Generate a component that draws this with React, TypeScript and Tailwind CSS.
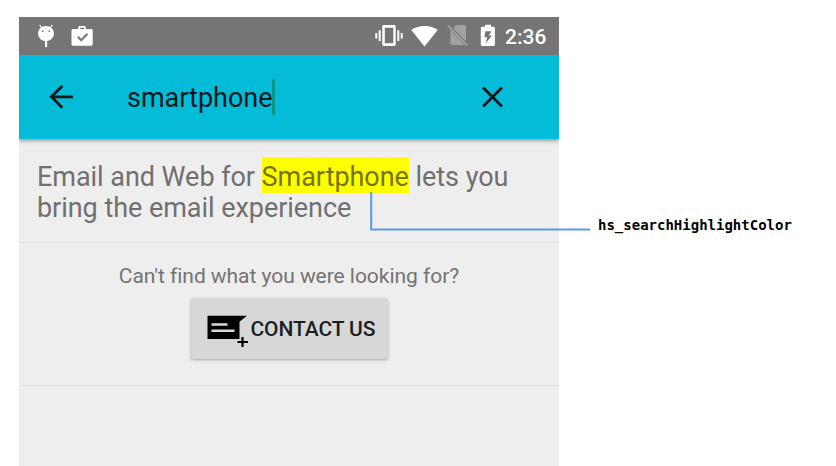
import type { ReactNode } from "react";

function StatusBar() {
  return (
    <div className="relative z-10 flex h-[38px] shrink-0 items-start bg-[#757575] text-white">
      <svg className="ml-[18px] mt-[7px] h-6 w-[18px]" viewBox="0 0 18 24" fill="currentColor">
        <path d="M2.6 0.8 4.6 3.6M15.4 0.8 13.4 3.6" stroke="currentColor" strokeWidth="1.1" />
        <path
          fillRule="evenodd"
          d="M9 1.9C13.5 1.9 16.9 5 16.9 9.2c0 4.6-3.4 7.9-7.9 7.9s-7.9-3.3-7.9-7.9C1.100 5 4.500 1.900 9 1.900ZM5.700 6.200a.9.9 0 1 0 0 1.800a.9.9 0 0 0 0-1.800Zm6.600 0a.9.9 0 1 0 0 1.800a.9.9 0 0 0 0-1.800Z"
        />
        <rect x="8" y="17" width="2.200" height="6.300" rx="1" />
      </svg>
      <svg className="ml-4 mt-[7px] h-6 w-6" viewBox="0 0 24 24" fill="currentColor">
        <path
          fillRule="evenodd"
          d="M7.200 5V3.600c0-.9.7-1.600 1.600-1.600h4.400c.9 0 1.600.7 1.600 1.600V5H20c1 0 1.700.7 1.700 1.700v13.200c0 1.100-.7 1.900-1.800 1.900H2.400C1.300 21.800.5 21 .5 19.900V6.700C.5 5.700 1.200 5 2.200 5Zm1.900 0h3.900V3.800H9.100ZM7.500 12 6 13.500l4.200 4.200 7-7.100-1.500-1.500-5.500 5.600Z"
        />
      </svg>
      <svg className="ml-[280px] mt-[5px] h-7 w-7" viewBox="0 0 28 28" fill="currentColor">
        <path
          fillRule="evenodd"
          d="M9 3h10c1 0 1.700.7 1.700 1.700v17.600c0 1-.7 1.700-1.700 1.700H9c-1 0-1.700-.7-1.700-1.700V4.700C7.300 3.700 8 3 9 3Zm.8 2.700v15.600h8.500V5.700Z"
        />
        <path d="M3.700 8.200h2v10.700h-2ZM.300 11h2v5.500h-2ZM22.300 8.200h2v10.700h-2ZM25.700 11h2v5.500h-2Z" />
      </svg>
      <svg className="ml-[8px] mt-[8px] h-[22px] w-[28px]" viewBox="0 0 28 22" fill="currentColor">
        <path d="M.3 5.100C8-.5 19.500-.5 26.700 5.100L13.500 21.500Z" />
      </svg>
      <svg className="ml-[8px] mt-[7px] h-6 w-[22px] text-[#a1a1a1]" viewBox="0 0 22 24" fill="currentColor">
        <path d="M9 1h8.300c1 0 1.700.7 1.700 1.700v15.700L5.700 4.800ZM3.400 6 17.800 21H5c-1 0-1.700-.7-1.700-1.700Z" />
        <path d="M2.200 1.200 21 20.500" stroke="#757575" strokeWidth="1.500" />
        <path d="M1 1.700 20.300 21.500" stroke="currentColor" strokeWidth="1.800" />
      </svg>
      <svg className="ml-[11px] mt-[7px] h-6 w-4" viewBox="0 0 16 24" fill="currentColor">
        <path
          fillRule="evenodd"
          d="M5 .8h6v2h2.400c.9 0 1.500.7 1.500 1.600v16.200c0 .9-.6 1.500-1.500 1.500H2.300C1.400 22.100.8 21.500.8 20.600V4.400c0-.9.6-1.600 1.500-1.600H5ZM5.500 7.200 4.300 13.200h2.900L5.500 19.500 12 11.400H8.800L11.500 7.200Z"
        />
      </svg>
      <span className="ml-[9px] mt-[4px] text-[21px] font-medium leading-8">2:36</span>
    </div>
  );
}

function SearchBar() {
  return (
    <div className="relative flex h-[84px] shrink-0 items-center bg-[#05bcd8] shadow-[0_2px_4px_rgba(0,0,0,0.35)]">
      <svg className="ml-[30px] h-6 w-[25px] text-[#08171a]" viewBox="0 0 25 24" fill="none" stroke="currentColor" strokeWidth="2.800">
        <path d="M24 11.800H2.500M13.300 .9 2.300 11.800 13.300 22.800" />
      </svg>
      <div className="ml-[53px] flex items-center">
        <span className="pt-[2px] text-[27px] leading-8 tracking-[-0.01px] text-[#06191c]">smartphone</span>
        <span className="-ml-px h-9 w-[3px] bg-[#079688]" />
      </div>
      <svg className="ml-auto mr-[56px] h-[21px] w-[21px] text-[#08171a]" viewBox="0 0 21 21" fill="none" stroke="currentColor" strokeWidth="2.900">
        <path d="M1 .5 20 19.500M20 .5 1 19.500" />
      </svg>
    </div>
  );
}

function Highlight({ children }: { children: ReactNode }) {
  return <mark className="bg-[#ffff00] pt-[4px] text-[#757500]">{children}</mark>;
}

function ContactIcon() {
  return (
    <svg className="mt-[5px] h-8 w-[41px]" viewBox="0 0 41 32">
      <path d="M.5.800H40L32.500 6.800V24H.5Z" fill="#000" />
      <path d="M4.500 9.500h16M4.500 15.700h23" stroke="#d6d8d7" strokeWidth="2.500" />
      <path d="M30 27h11M35.500 22v10" stroke="#d6d8d7" strokeWidth="4" />
      <path d="M30.500 27h10.500M35.500 22v10" stroke="#000" strokeWidth="2.200" />
    </svg>
  );
}

export default function App() {
  return (
    <div className="relative flex h-[466px] w-[836px] overflow-hidden bg-white pl-[19px] pt-[17px] font-[Roboto,sans-serif]">
      <div className="flex w-[540px] flex-col overflow-hidden bg-[#eeeeee]">
        <StatusBar />
        <SearchBar />
        <div className="h-[104px] shrink-0 border-b border-[#dfdfdf] pl-[18px] pt-[23px] text-[27px] leading-[31px] tracking-[-0.045px] text-[#707070]">
          <p>
            Email and Web for <Highlight>Smartphone</Highlight> lets you
            <br />
            bring the email experience
          </p>
        </div>
        <div className="flex h-[143px] shrink-0 flex-col items-center border-b border-[#dfdfdf] pt-[21px]">
          <p className="text-[21px] leading-[25px] tracking-[-0.04px] text-[#737373]">Can't find what you were looking for?</p>
          <button className="mt-[9px] flex h-[61px] w-[197px] items-center rounded-[3px] bg-[#d6d8d7] pl-4 text-[#1d1e1e] shadow-[0_1px_3px_rgba(0,0,0,0.3)]">
            <ContactIcon />
            <span className="ml-[3px] mt-px whitespace-nowrap text-[21px] font-medium leading-6 tracking-[-0.1px]">CONTACT US</span>
          </button>
        </div>
      </div>
      <span className="ml-[39px] mt-[200px] font-['DejaVu_Sans_Mono',monospace] text-sm font-bold leading-4 text-black">
        hs_searchHighlightColor
      </span>
      <svg className="absolute left-[370px] top-[192px] h-[40px] w-[220px]" viewBox="0 0 220 40" fill="none">
        <path d="M1.200 0V37.500H220" stroke="#5a9ae2" strokeWidth="2" />
      </svg>
    </div>
  );
}
